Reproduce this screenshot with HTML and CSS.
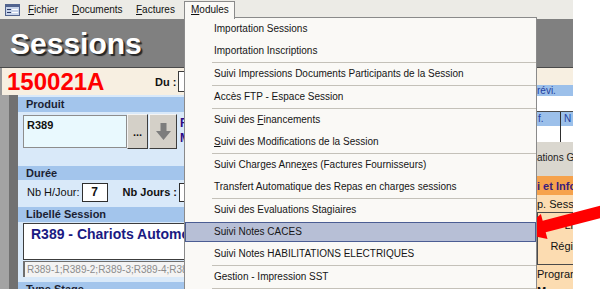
FILE: index.html
```html
<!DOCTYPE html>
<html>
  <head>
    <meta charset="UTF-8">
    <title>Sessions</title>
    <link rel="stylesheet" href="styles.css">
  </head>

  <body>
    <div class="app">
      <!-- BARRE DE MENUS -->
      <div class="menubar">
        <span class="app-icon">
          <svg width="15" height="12" viewBox="0 0 15 12">
            <rect x="0.5" y="0.5" width="14" height="11" fill="#c8d4ea" stroke="#52648e"/>
            <rect x="1" y="1" width="13" height="2" fill="#52648e"/>
            <rect x="2" y="5" width="4" height="1" fill="#2b3a66"/>
            <rect x="7" y="5" width="6" height="1" fill="#ffffff"/>
            <rect x="2" y="8" width="4" height="1" fill="#2b3a66"/>
            <rect x="7" y="8" width="6" height="1" fill="#ffffff"/>
          </svg>
        </span>
        <span class="menu-title m-fichier"><u>F</u>ichier</span>
        <span class="menu-title m-documents"><u>D</u>ocuments</span>
        <span class="menu-title m-factures"><u>F</u>actures</span>
        <span class="menu-title m-modules open"><u>M</u>odules</span>
      </div>

      <div class="title-band">
        <h1>Sessions</h1>
      </div>

      <div class="main">
        <!-- COLONNE GAUCHE DU FORMULAIRE -->
        <div class="left">
          <div class="id-row">
            <span class="session-id">150021A</span>
            <span class="lbl-bold">Du :</span>
            <span class="date-box"></span>
          </div>

          <div class="panel">
            <div class="strip"></div>
            <div class="fields">
              <div class="section-head">Produit</div>
              <div class="product-row">
                <div class="product-field">R389</div>
                <span class="btn btn-dots">...</span>
                <span class="btn btn-down">
                  <svg width="15" height="18" viewBox="0 0 15 18">
                    <polygon points="4.5,0 10.5,0 10.5,8 15,8 7.5,17 0,8 4.5,8" fill="#7d7d7d"/>
                  </svg>
                </span>
                <div class="product-name">R<br>M</div>
              </div>

              <div class="section-head head-duree">Durée</div>
              <div class="duration-row">
                <span class="lbl">Nb H/Jour:</span>
                <span class="num-box">7</span>
                <span class="lbl-bold lbl-jours">Nb Jours :</span>
                <span class="num-box"></span>
              </div>

              <div class="section-head">Libellé Session</div>
              <div class="libelle-box">R389 - Chariots Automoteurs</div>
              <div class="codes-box">R389-1;R389-2;R389-3;R389-4;R389-5</div>

              <div class="section-head head-type">Type Stage</div>
            </div>
          </div>
        </div>

        <div class="mid"></div>

        <!-- BORD DROIT VISIBLE -->
        <div class="right">
          <div class="r-beige"></div>
          <div class="r-band">révi.</div>
          <div class="r-gap"></div>
          <div class="r-table">
            <div class="r-row r-th"><span class="c1">f.</span><span class="c2">N</span></div>
            <div class="r-row r-td"><span class="c1"></span><span class="c2"></span></div>
          </div>
          <div class="r-tab">ations G</div>
          <div class="r-orange">i et Info</div>
          <div class="r-peach">
            <div class="r-line">p. Sessi</div>
            <div class="r-box">
              <div class="r-right">Li</div>
              <div class="r-right">Régi</div>
            </div>
            <div class="r-line">Programm</div>
            <div class="r-line r-strong">M</div>
          </div>
        </div>
      </div>

      <!-- MENU MODULES OUVERT -->
      <ul class="dropdown">
        <li>Importation Sessions</li>
        <li>Importation Inscriptions</li>
        <li class="sep"></li>
        <li>Suivi Impressions Documents Participants de la Session</li>
        <li class="sep"></li>
        <li>Accès FTP - Espace Session</li>
        <li class="sep"></li>
        <li>Suivi des <u>F</u>inancements</li>
        <li><u>S</u>uivi des Modifications de la Session</li>
        <li class="sep"></li>
        <li>Suivi Charges Anne<u>x</u>es (Factures Fournisseurs)</li>
        <li>Transfert Automatique des Repas en charges sessions</li>
        <li class="sep"></li>
        <li>Suivi des Evaluations Stagiaires</li>
        <li class="active">Suivi Notes CACES</li>
        <li>Suivi Notes HABILITATIONS ELECTRIQUES</li>
        <li class="sep"></li>
        <li>Gestion - Impression SST</li>
        <li class="sep"></li>
      </ul>
    </div>

    <!-- FLECHE ROUGE -->
    <svg class="arrow" width="600" height="289" viewBox="0 0 600 289">
      <polygon points="519,233 540.9,213.9 542.7,220.7 609.5,203.4 612.5,215 545.7,232.3 547.5,239.1" fill="#ff0000"/>
    </svg>
  </body>
</html>
```

FILE: styles.css
```css
/* Ecran Sessions */
body {
  margin: 0;
  background: white;
  font-family: "Liberation Sans", Arial, sans-serif;
  font-size: 11px;
  color: #111;
}

.app {
  position: relative;
  width: 573px;
  height: 289px;
  overflow: hidden;
  background: #f7efe1;
}

/* barre de menus */
.menubar {
  display: flex;
  height: 19px;
  background: #ecebe6;
  font-size: 10px;
}

.app-icon {
  width: 21px;
  display: flex;
  align-items: center;
  padding-left: 5px;
  box-sizing: border-box;
}

.menu-title {
  flex: none;
  padding-left: 7px;
  line-height: 19px;
  box-sizing: border-box;
}

.m-fichier { width: 44px; }
.m-documents { width: 64px; }
.m-factures { width: 55px; }
.m-modules { width: 51px; }

.menu-title.open {
  position: relative;
  z-index: 2;
  margin-top: 1px;
  height: 18px;
  line-height: 16px;
  padding-left: 6px;
  background: #faf9f6;
  border: 1px solid #8a8a8a;
  border-bottom: none;
}

/* bandeau titre */
.title-band {
  height: 48px;
  background: #808080;
  border-bottom: 1px solid #4a4a4a;
}

.title-band h1 {
  margin: 0;
  padding: 8px 0 0 10px;
  font-size: 30px;
  line-height: 34px;
  color: white;
  text-shadow: 2px 2px 1px #262626;
}

.main {
  display: flex;
  height: 221px;
}

.left {
  flex: none;
  width: 184px;
  overflow: hidden;
}

.mid {
  flex: none;
  width: 353px;
}

.right {
  flex: none;
  width: 36px;
  overflow: hidden;
  font-size: 10px;
  white-space: nowrap;
}

/* ligne numero de session */
.id-row {
  display: flex;
  align-items: center;
  height: 27px;
  border-left: 2px solid #9a9a9a;
  white-space: nowrap;
}

.id-row > * {
  flex: none;
}

.session-id {
  width: 153px;
  padding-left: 5px;
  box-sizing: border-box;
  font-size: 24px;
  font-weight: bold;
  color: #ff0000;
}

.lbl-bold {
  font-weight: bold;
  white-space: nowrap;
}

.date-box {
  margin-left: 2px;
  width: 30px;
  height: 19px;
  background: white;
  border: 1px solid #3a3a3a;
}

/* zone des champs */
.panel {
  display: flex;
  height: 194px;
}

.strip {
  flex: none;
  width: 18px;
  background: linear-gradient(to right, #a3a3a3 0 9px, #717171 9px 18px);
}

.fields {
  flex: 1;
  min-width: 0;
  padding-top: 2px;
  background: #d9e9f9;
}

.section-head {
  height: 15px;
  line-height: 15px;
  padding-left: 8px;
  background: #a3c5ec;
  color: #1b1f33;
  font-weight: bold;
  white-space: nowrap;
}

.head-duree {
  margin-top: 1px;
  height: 14px;
  line-height: 14px;
}

.head-type {
  margin-top: 5px;
}

.product-row {
  display: flex;
  align-items: flex-start;
  height: 51px;
  padding-top: 2px;
}

.product-row > * {
  flex: none;
}

.product-field {
  margin: 1px 0 0 5px;
  width: 104px;
  height: 33px;
  padding: 2px 3px;
  box-sizing: border-box;
  background: #e9f9fe;
  border: 1px solid #8d8d8d;
  font-weight: bold;
  line-height: 14px;
}

.btn {
  display: flex;
  align-items: center;
  justify-content: center;
  height: 35px;
  box-sizing: border-box;
  background: #d4d0c8;
  border: 1px solid;
  border-color: #f4f4f4 #3d3d3d #3d3d3d #f4f4f4;
  font-weight: bold;
}

.btn-dots {
  width: 21px;
}

.btn-down {
  width: 28px;
  margin-left: 1px;
}

.product-name {
  margin-left: 3px;
  padding-top: 2px;
  font-size: 12px;
  line-height: 15px;
  font-weight: bold;
  color: #2c0a84;
}

.duration-row {
  display: flex;
  align-items: flex-start;
  height: 27px;
  padding: 3px 0 0 9px;
  box-sizing: border-box;
  white-space: nowrap;
}

.duration-row > * {
  flex: none;
}

.lbl,
.lbl-jours {
  line-height: 19px;
}

.lbl-jours {
  margin-left: 15px;
}

.num-box {
  margin-left: 2px;
  width: 26px;
  height: 19px;
  box-sizing: border-box;
  background: white;
  border: 1px solid #2e2e2e;
  text-align: center;
  line-height: 17px;
  font-size: 12px;
  font-weight: bold;
}

.libelle-box {
  margin: 1px 0 0 5px;
  width: 200px;
  height: 37px;
  box-sizing: border-box;
  padding: 2px 0 0 7px;
  background: white;
  border: 1px solid #3c3c3c;
  color: #1a1a82;
  font-size: 14px;
  font-weight: bold;
  line-height: 16px;
  white-space: nowrap;
}

.codes-box {
  margin: 1px 0 0 5px;
  width: 200px;
  height: 16px;
  box-sizing: border-box;
  padding-left: 2px;
  background: #f3f3f3;
  border-top: 1px solid #6e6e6e;
  border-left: 2px solid #6e6e6e;
  color: #8b8b8b;
  font-size: 10px;
  line-height: 15px;
  white-space: nowrap;
}

/* bord droit */
.r-beige {
  height: 17px;
}

.r-band {
  height: 11px;
  line-height: 11px;
  background: #9cc0ea;
  color: #1f3ea0;
}

.r-gap {
  height: 15px;
  background: white;
}

.r-table {
  border-top: 1px solid #4a4a4a;
}

.r-row {
  display: flex;
}

.r-row .c1 {
  flex: none;
  width: 22px;
  padding-left: 1px;
  border-right: 1px solid #2e2e2e;
}

.r-row .c2 {
  padding-left: 3px;
}

.r-th {
  height: 14px;
  line-height: 14px;
  background: #9cc0ea;
  color: #1f3ea0;
}

.r-td {
  height: 16px;
  background: white;
}

.r-tab {
  height: 34px;
  line-height: 32px;
  background: #dad7cf;
  color: #222;
}

.r-orange {
  height: 19px;
  line-height: 20px;
  background: #f6a24c;
  color: #3a1c7c;
  font-size: 11px;
  font-weight: bold;
}

.r-peach {
  height: 100px;
  background: #fcdcb1;
}

.r-line {
  height: 17px;
  line-height: 19px;
  font-size: 11px;
}

.r-box {
  height: 51px;
  border-top: 1px solid #4a4a4a;
  border-bottom: 1px solid #4a4a4a;
  border-left: 1px solid #4a4a4a;
  font-size: 11px;
}

.r-right {
  text-align: right;
  height: 21px;
  line-height: 24px;
}

.r-strong {
  font-weight: bold;
}

/* menu deroulant */
.dropdown {
  position: absolute;
  z-index: 1;
  left: 184px;
  top: 17px;
  width: 353px;
  margin: 0;
  padding: 0;
  box-sizing: border-box;
  list-style: none;
  background: #faf9f6;
  border: 1px solid #8a8a8a;
  font-size: 10px;
  color: #151515;
}

.dropdown li {
  height: 22px;
  line-height: 22px;
  padding-left: 29px;
  white-space: nowrap;
}

.dropdown li.sep {
  height: 1px;
  margin-left: 27px;
  padding: 0;
  background: #c4c1b9;
}

.dropdown li.active {
  height: 20px;
  line-height: 18px;
  margin: 1px 0;
  padding-left: 28px;
  background: #b7bfd6;
  border: 1px solid #4b5d93;
  box-sizing: border-box;
}

.arrow {
  position: absolute;
  left: 0;
  top: 0;
  pointer-events: none;
}
```
